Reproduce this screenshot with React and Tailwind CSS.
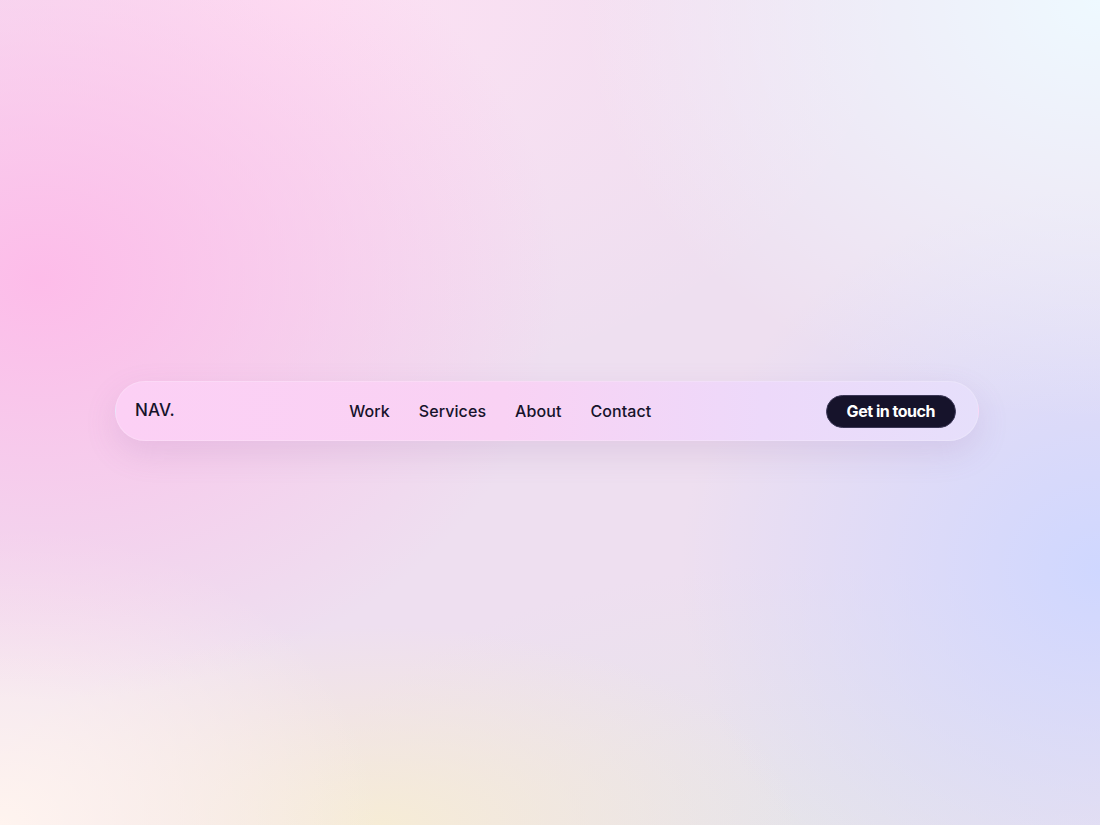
export default function App() {
    const links = ['Work', 'Services', 'About', 'Contact'];

    return (
        <div
            className="h-screen w-full flex items-center justify-center bg-[#eedff0] bg-[radial-gradient(ellipse_520px_420px_at_40px_280px,#fdbce9_0%,rgba(253,188,233,0)_100%),radial-gradient(ellipse_520px_420px_at_1100px_0px,#eef9ff_0%,rgba(238,249,255,0)_100%),radial-gradient(ellipse_420px_380px_at_1100px_570px,#cfd7ff_0%,rgba(207,215,255,0)_100%),radial-gradient(ellipse_380px_300px_at_0px_825px,#fff4ef_0%,rgba(255,244,239,0)_100%),radial-gradient(ellipse_420px_200px_at_380px_825px,#f6ecd6_0%,rgba(246,236,214,0)_100%),radial-gradient(ellipse_500px_260px_at_800px_825px,#e6e4ea_0%,rgba(230,228,234,0)_100%),radial-gradient(ellipse_600px_400px_at_300px_0px,#fde0f3_0%,rgba(253,224,243,0)_100%)]"
            style={{ fontFamily: 'Inter, "Noto Sans", sans-serif' }}
        >
            <nav className="w-[864px] h-[60px] -ml-[6px] -mt-[3px] rounded-full flex items-center justify-between pl-[19px] pr-[22px] bg-[linear-gradient(90deg,#fcd0f5_0%,#f9d2f4_45%,#edd9fa_75%,#e6dffb_100%)] border border-white/20 shadow-[0_12px_32px_rgba(150,100,170,0.16)]">
                <span className="text-[17px] font-medium tracking-[0.01em] text-[#16132b]">NAV.</span>

                <div className="flex items-center gap-[29px]">
                    {links.map((l) => (
                        <a key={l} href="#" className="text-[16px] font-medium tracking-[0.005em] text-[#16132b]">
                            {l}
                        </a>
                    ))}
                </div>

                <button className="h-[33px] px-[20px] rounded-full bg-[#16132b] border border-[#3b3656] text-white text-[16px] font-bold tracking-[-0.03em]">
                    Get in touch
                </button>
            </nav>
        </div>
    );
}
